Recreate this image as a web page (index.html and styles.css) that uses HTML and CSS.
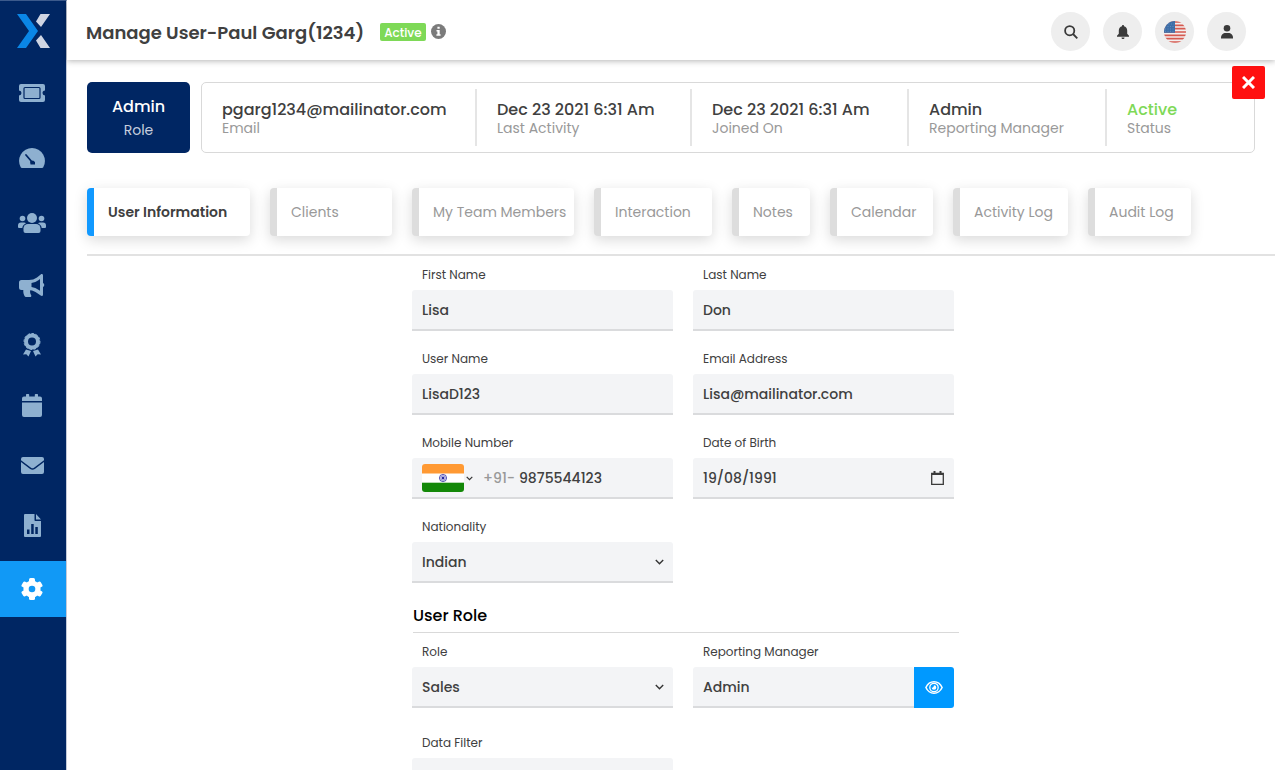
FILE: index.html
```html
<!DOCTYPE html>
<html lang="en">
<head>
  <meta charset="UTF-8">
  <meta name="viewport" content="width=device-width, initial-scale=1.0">
  <title>Manage User</title>
  <link rel="stylesheet" href="styles.css">
</head>
<body>
  <div class="app">
    <!-- Sidebar -->
    <aside class="sidebar">
      <a class="logo" href="#" aria-label="Home">
        <svg width="33" height="34" viewBox="0 0 33 34">
          <path fill="#0a86e6" d="M0 0h9l12 17L9 34H0l12-17z"/>
          <path fill="#cfd5e3" d="M23.500 0H33l-9 13-5-5.500zM23.500 34H33l-9-13-5 5.500z"/>
        </svg>
      </a>
      <nav class="menu">
        <a class="menu-item tall" href="#" aria-label="Tickets">
          <svg width="26" height="18" viewBox="0 0 26 18">
            <path fill="currentColor" d="M2 0h22a2 2 0 0 1 2 2v4.500a2.500 2.500 0 0 0 0 5V16a2 2 0 0 1-2 2H2a2 2 0 0 1-2-2v-4.500a2.500 2.500 0 0 0 0-5V2a2 2 0 0 1 2-2z"/>
            <rect x="5" y="3.500" width="16" height="11" rx="1" fill="none" stroke="#002663" stroke-width="1.200"/>
          </svg>
        </a>
        <a class="menu-item tall" href="#" aria-label="Dashboard">
          <svg width="26" height="20" viewBox="0 0 26 20">
            <path fill="currentColor" d="M13 0a13 13 0 0 1 11.300 19.300c-.3.500-.7.700-1.200.700H2.900c-.500 0-.9-.2-1.200-.700A13 13 0 0 1 13 0z"/>
            <path d="M7 7l6 7" stroke="#002663" stroke-width="1.800" stroke-linecap="round"/>
            <path d="M11 13.500l3-1 2 1.500v2.500h-4.500z" fill="#002663"/>
          </svg>
        </a>
        <a class="menu-item tall" href="#" aria-label="Users">
          <svg width="28" height="20" viewBox="0 0 28 20" fill="currentColor">
            <circle cx="14" cy="5" r="5"/>
            <circle cx="4.500" cy="5.500" r="2.800"/>
            <circle cx="23.500" cy="5.500" r="2.800"/>
            <path d="M5.500 18v-2.500a4.500 4.500 0 0 1 4.500-4.500h8a4.500 4.500 0 0 1 4.500 4.500V18a2 2 0 0 1-2 2h-13a2 2 0 0 1-2-2z"/>
            <path d="M3 9.500h3c.8 0 1.500.3 2 .8-2.200 1-3.500 2.700-3.700 4.700H1a1 1 0 0 1-1-1v-1.500a3 3 0 0 1 3-3zM25 9.500h-3c-.8 0-1.500.3-2 .8 2.200 1 3.500 2.700 3.700 4.700H27a1 1 0 0 0 1-1v-1.500a3 3 0 0 0-3-3z"/>
          </svg>
        </a>
        <a class="menu-item" href="#" aria-label="Campaigns">
          <svg width="26" height="23" viewBox="0 0 26 23" fill="currentColor">
            <path fill-rule="evenodd" d="M24 9V1.500c0-.8-.4-1.500-1.200-1.500-.5 0-.8.2-1.100.4L18 3.400A15 15 0 0 1 10 6H2.500A2.500 2.500 0 0 0 0 8.500v5A2.500 2.500 0 0 0 2.500 16h1.800c-.2 2.200.3 4.200 1.200 6 .3.600.9 1 1.500 1h4c1.100 0 1.700-1.200 1.100-2.100-.9-1.300-1.200-3-.9-4.700 2.500.3 4.900 1.200 6.800 2.700l3.700 2.700c.3.200.7.400 1.100.4.800 0 1.200-.7 1.200-1.500V13a2.200 2.200 0 0 0 0-4zM21 16.800l-1.200-.9A17 17 0 0 0 12.500 13V9a17 17 0 0 0 7.300-3l1.200-.9z"/>
          </svg>
        </a>
        <a class="menu-item" href="#" aria-label="Awards">
          <svg width="18" height="24" viewBox="0 0 18 24">
            <circle cx="9" cy="8.500" r="6" fill="none" stroke="currentColor" stroke-width="4"/>
            <circle cx="9" cy="8.500" r="8" fill="none" stroke="currentColor" stroke-width="1" stroke-dasharray="2.600 1.500"/>
            <path fill="currentColor" d="M3 16.500l5 1.500-2.500 5.500-2.200-2.300-3.300.3zM15 16.500l-5 1.500 2.500 5.500 2.200-2.300 3.300.3z"/>
          </svg>
        </a>
        <a class="menu-item" href="#" aria-label="Calendar">
          <svg width="20" height="23" viewBox="0 0 20 23" fill="currentColor">
            <path d="M0 7V4.500a2 2 0 0 1 2-2h2V.7C4 .3 4.300 0 4.700 0h1.800c.4 0 .7.300.7.700v1.800h5.600V.7c0-.4.300-.7.7-.7h1.800c.4 0 .7.300.7.700v1.800h2a2 2 0 0 1 2 2V7zM0 8.400h20V21a2 2 0 0 1-2 2H2a2 2 0 0 1-2-2z"/>
          </svg>
        </a>
        <a class="menu-item" href="#" aria-label="Mail">
          <svg width="23" height="17" viewBox="0 0 23 17" fill="currentColor">
            <path d="M0 3.200V2a2 2 0 0 1 2-2h19a2 2 0 0 1 2 2v1.200L13 10.800c-.9.700-2.100.7-3 0z"/>
            <path d="M0 5l9.200 7c1.400 1 3.200 1 4.600 0L23 5v10a2 2 0 0 1-2 2H2a2 2 0 0 1-2-2z"/>
          </svg>
        </a>
        <a class="menu-item" href="#" aria-label="Reports">
          <svg width="17" height="23" viewBox="0 0 17 23">
            <path fill="currentColor" d="M1 0h9.500v6c0 .6.400 1 1 1H17v15a1 1 0 0 1-1 1H1a1 1 0 0 1-1-1V1a1 1 0 0 1 1-1zM12 0l5 5.500h-5z"/>
            <path fill="#002663" d="M3 15.500h2.500V20H3zM7.200 10h2.500v10H7.200zM11.300 13h2.500v7h-2.500z"/>
          </svg>
        </a>
        <a class="menu-item active" href="#" aria-label="Settings">
          <svg width="22" height="22" viewBox="0 0 22 22" fill="#fff">
            <circle cx="11" cy="11" r="8.600"/>
            <rect x="8" y="0" width="6" height="22" rx="1.500"/>
            <rect x="8" y="0" width="6" height="22" rx="1.500" transform="rotate(60 11 11)"/>
            <rect x="8" y="0" width="6" height="22" rx="1.500" transform="rotate(120 11 11)"/>
            <circle cx="11" cy="11" r="3.300" fill="#1199f6"/>
          </svg>
        </a>
      </nav>
    </aside>

    <div class="page">
      <!-- Top bar -->
      <header class="topbar">
        <h1 class="title">Manage User-Paul Garg(1234)</h1>
        <span class="badge">Active</span>
        <svg class="info" width="15" height="15" viewBox="0 0 15 15">
          <circle cx="7.500" cy="7.500" r="7.500" fill="#7b7b7b"/>
          <path fill="#fff" d="M6.400 2.800h2.300v2H6.400zM5.500 6h3.200v4.200h.9v1.500H5.400v-1.500h1V7.500h-.9z"/>
        </svg>
        <div class="actions">
          <button class="round-btn" type="button" aria-label="Search">
            <svg width="14" height="14" viewBox="0 0 14 14" fill="none" stroke="#3a3a3a" stroke-width="1.800">
              <circle cx="5.700" cy="5.700" r="4.600"/>
              <path d="M9 9l4.300 4.300"/>
            </svg>
          </button>
          <button class="round-btn" type="button" aria-label="Notifications">
            <svg width="12" height="14" viewBox="0 0 12 14" fill="#3a3a3a">
              <path d="M6 0c.6 0 1 .4 1 1v.3c1.900.5 3.200 2.100 3.200 4.200v3.200l1.800 2.100v.9H0v-.9l1.800-2.100V5.500c0-2.100 1.300-3.700 3.200-4.200V1c0-.6.400-1 1-1zM4.500 12.400h3c0 1-.7 1.600-1.500 1.600s-1.500-.6-1.500-1.600z"/>
            </svg>
          </button>
          <button class="round-btn" type="button" aria-label="Language">
            <svg width="22" height="22" viewBox="0 0 22 22">
              <clipPath id="round"><circle cx="11" cy="11" r="11"/></clipPath>
              <g clip-path="url(#round)">
                <rect width="22" height="22" fill="#f3efee"/>
                <path stroke="#d55a50" stroke-width="1.700" d="M0 1h22M0 4.300h22M0 7.600h22M0 11h22M0 14.300h22M0 17.600h22M0 21h22"/>
                <rect width="11" height="11.800" fill="#3d6ea8"/>
                <path stroke="#7f9fc6" stroke-width=".6" stroke-dasharray="1 1.500" d="M2 3h9M1 5.500h10M1 8h10M1 10.300h10"/>
              </g>
            </svg>
          </button>
          <button class="round-btn" type="button" aria-label="Profile">
            <svg width="12" height="14" viewBox="0 0 12 14" fill="#3a3a3a">
              <circle cx="6" cy="3.300" r="3.300"/>
              <path d="M0 13.500v-1c0-2.500 2.200-4.500 4.500-4.500h3C9.800 8 12 10 12 12.500v1z"/>
            </svg>
          </button>
        </div>
      </header>

      <main class="content">
        <!-- User summary -->
        <section class="summary">
          <div class="role-card">
            <strong class="role-name">Admin</strong>
            <span class="role-label">Role</span>
          </div>
          <dl class="facts">
            <div class="fact"><dt>Email</dt><dd>pgarg1234@mailinator.com</dd></div>
            <div class="fact"><dt>Last Activity</dt><dd>Dec 23 2021 6:31 Am</dd></div>
            <div class="fact"><dt>Joined On</dt><dd>Dec 23 2021 6:31 Am</dd></div>
            <div class="fact"><dt>Reporting Manager</dt><dd>Admin</dd></div>
            <div class="fact"><dt>Status</dt><dd class="green">Active</dd></div>
          </dl>
          <button class="close" type="button" aria-label="Close">
            <svg width="13" height="13" viewBox="0 0 13 13" stroke="#fff" stroke-width="3">
              <path d="M1 1l11 11M12 1L1 12"/>
            </svg>
          </button>
        </section>

        <!-- Tabs -->
        <nav class="tabs">
          <a class="tab current" href="#">User Information</a>
          <a class="tab" href="#">Clients</a>
          <a class="tab" href="#">My Team Members</a>
          <a class="tab" href="#">Interaction</a>
          <a class="tab" href="#">Notes</a>
          <a class="tab" href="#">Calendar</a>
          <a class="tab" href="#">Activity Log</a>
          <a class="tab" href="#">Audit Log</a>
        </nav>

        <!-- User form -->
        <form class="form">
          <div class="fields">
            <div class="field">
              <label for="firstName">First Name</label>
              <input class="control" type="text" id="firstName" value="Lisa">
            </div>
            <div class="field">
              <label for="lastName">Last Name</label>
              <input class="control" type="text" id="lastName" value="Don">
            </div>
            <div class="field">
              <label for="userName">User Name</label>
              <input class="control" type="text" id="userName" value="LisaD123">
            </div>
            <div class="field">
              <label for="email">Email Address</label>
              <input class="control" type="email" id="email" value="Lisa@mailinator.com">
            </div>
            <div class="field">
              <label for="mobile">Mobile Number</label>
              <div class="control group">
                <button class="country" type="button" aria-label="Country code">
                  <svg width="42" height="28" viewBox="0 0 42 28">
                    <clipPath id="flag"><rect width="42" height="28" rx="3"/></clipPath>
                    <g clip-path="url(#flag)">
                      <rect width="42" height="28" fill="#fff"/>
                      <rect width="42" height="9.500" fill="#ff9933"/>
                      <rect y="18.700" width="42" height="9.300" fill="#138808"/>
                    </g>
                    <circle cx="21" cy="14" r="3.600" fill="#d9d9f2" stroke="#3b3ba8" stroke-width=".8"/>
                    <path stroke="#3b3ba8" stroke-width=".4" d="M17.500 14h7M21 10.500v7M18.500 11.500l5 5M23.500 11.500l-5 5"/>
                    <circle cx="21" cy="14" r="1.200" fill="#26269c"/>
                  </svg>
                  <svg width="7" height="5" viewBox="0 0 7 5" fill="none" stroke="#333" stroke-width="1.200">
                    <path d="M.7.900l2.800 2.800L6.300.900"/>
                  </svg>
                </button>
                <span class="prefix">+91-</span>
                <input class="bare" type="tel" id="mobile" value="9875544123">
              </div>
            </div>
            <div class="field">
              <label for="birth">Date of Birth</label>
              <div class="control group">
                <input class="bare" type="text" id="birth" value="19/08/1991">
                <button class="picker" type="button" aria-label="Open calendar">
                  <svg width="13" height="14" viewBox="0 0 13 14" fill="none" stroke="#3a3a3a">
                    <path stroke-width="1.300" d="M.7 2.500h11.600v10.800H.7z"/>
                    <path stroke-width="2" d="M.7 3h11.600M3.500 0v3M9.500 0v3"/>
                  </svg>
                </button>
              </div>
            </div>
            <div class="field">
              <label for="nationality">Nationality</label>
              <div class="select">
                <select class="control" id="nationality"><option>Indian</option></select>
                <svg class="arrow" width="9" height="6" viewBox="0 0 9 6" fill="none" stroke="#333" stroke-width="1.400">
                  <path d="M.8 1l3.700 3.700L8.200 1"/>
                </svg>
              </div>
            </div>
          </div>

          <h2 class="section-title">User Role</h2>
          <div class="fields wide">
            <div class="field">
              <label for="role">Role</label>
              <div class="select">
                <select class="control" id="role"><option>Sales</option></select>
                <svg class="arrow" width="9" height="6" viewBox="0 0 9 6" fill="none" stroke="#333" stroke-width="1.400">
                  <path d="M.8 1l3.700 3.700L8.200 1"/>
                </svg>
              </div>
            </div>
            <div class="field">
              <label for="manager">Reporting Manager</label>
              <div class="with-button">
                <input class="control" type="text" id="manager" value="Admin">
                <button class="view" type="button" aria-label="View manager">
                  <svg width="18" height="13" viewBox="0 0 18 13" fill="none" stroke="#fff" stroke-width="1.500">
                    <path d="M.9 6.500C2.500 3 5.500.8 9 .8s6.500 2.200 8.100 5.700c-1.600 3.500-4.600 5.700-8.100 5.700S2.500 10 .9 6.500z"/>
                    <circle cx="9" cy="6.500" r="4.200" stroke-width="1.300"/>
                    <path fill="#fff" stroke="none" d="M9 4.200a2.300 2.300 0 1 1-2.300 2.300c.9.500 2.100-.3 2.300-2.300z"/>
                  </svg>
                </button>
              </div>
            </div>
            <div class="field">
              <label for="filter">Data Filter</label>
              <div class="select">
                <select class="control" id="filter"></select>
              </div>
            </div>
          </div>
        </form>
      </main>
    </div>
  </div>
</body>
</html>
```
FILE: styles.css
```css
* {
  box-sizing: border-box;
}
body {
  margin: 0;
  font-family: Poppins, Inter, sans-serif;
  font-size: 14px;
  color: #404040;
  background: #fff;
}
button {
  padding: 0;
  border: none;
  cursor: pointer;
}
svg {
  display: block;
  flex: none;
}
a {
  text-decoration: none;
}
.app {
  display: flex;
  height: 100vh;
  overflow: hidden;
}

/* Sidebar */
.sidebar {
  flex: none;
  width: 67px;
  background: #002663;
  border-top: 1px solid #3c5a8c;
  border-right: 1px solid #c3cad9;
}
.logo {
  display: flex;
  align-items: center;
  justify-content: center;
  height: 59px;
}
.menu {
  display: flex;
  flex-direction: column;
}
.menu-item {
  display: flex;
  align-items: center;
  justify-content: center;
  height: 60px;
  padding-right: 2px;
  color: #8eb0d0;
}
.menu-item.tall {
  height: 65px;
}
.menu-item.active {
  height: 56px;
  margin-top: 6px;
  background: #1199f6;
}

/* Top bar */
.page {
  flex: 1;
  display: flex;
  flex-direction: column;
  min-width: 0;
}
.topbar {
  display: flex;
  flex: none;
  align-items: center;
  height: 60px;
  padding: 3px 29px 0 19px;
  box-shadow: 0 1px 6px rgba(0, 0, 0, 0.3);
  z-index: 1;
}
.title {
  margin: 0;
  padding-top: 2px;
  font-size: 18px;
  font-weight: 600;
  line-height: 28px;
}
.badge {
  margin: 0 5px 0 16px;
  padding: 1px 4px 0;
  font-size: 12px;
  font-weight: 500;
  line-height: 17px;
  color: #fff;
  background: #7ed957;
  border-radius: 2px;
}
.actions {
  display: flex;
  gap: 13px;
  margin-left: auto;
}
.round-btn {
  display: flex;
  align-items: center;
  justify-content: center;
  width: 39px;
  height: 39px;
  background: #eee;
  border-radius: 50%;
}

/* User summary */
.content {
  flex: 1;
  min-height: 0;
  overflow: hidden;
  padding: 22px 0 0 20px;
}
.summary {
  position: relative;
  display: flex;
  gap: 11px;
  padding-right: 20px;
}
.role-card {
  display: flex;
  flex: none;
  flex-direction: column;
  align-items: center;
  justify-content: center;
  width: 103px;
  height: 71px;
  padding-top: 2px;
  color: #fff;
  background: #002663;
  border-radius: 5px;
}
.role-name {
  font-size: 16px;
  font-weight: 500;
  line-height: 22px;
}
.role-label {
  line-height: 24px;
  color: #c6cede;
}
.facts {
  display: grid;
  flex: 1;
  grid-template-columns: 275fr 215fr 217fr 198fr 147fr;
  margin: 0;
  padding: 6px 0;
  border: 1px solid #d9d9d9;
  border-radius: 5px;
}
.fact {
  display: flex;
  flex-direction: column-reverse;
  justify-content: center;
  padding: 2px 0 0 20px;
  border-right: 2px solid #e5e5e5;
  white-space: nowrap;
}
.fact:last-child {
  border-right: none;
}
.fact dt {
  line-height: 18px;
  color: #999;
}
.fact dd {
  margin: 0;
  font-size: 16px;
  font-weight: 500;
  line-height: 18px;
}
.fact .green {
  color: #7ed957;
}
.close {
  position: absolute;
  top: -16px;
  right: 10px;
  display: flex;
  align-items: center;
  justify-content: center;
  width: 33px;
  height: 33px;
  background: #ff1010;
  border-radius: 2px;
}

/* Tabs */
.tabs {
  display: grid;
  grid-template-columns: 163px 122px 162px 118px 78px 103px 115px 103px;
  gap: 20px;
  padding: 35px 0 18px;
  border-bottom: 2px solid #e2e2e2;
}
.tab {
  height: 48px;
  padding-left: 14px;
  line-height: 48px;
  white-space: nowrap;
  color: #999;
  background: #fff;
  border-left: 7px solid #ddd;
  border-radius: 4px;
  box-shadow: 0 4px 14px rgba(0, 0, 0, 0.15);
}
.tab.current {
  font-weight: 600;
  color: #404040;
  border-left-color: #1199ff;
}

/* User form */
.form {
  width: 546px;
  margin: 0 auto;
  padding: 9px 0 0 4px;
}
.fields {
  display: grid;
  grid-template-columns: 1fr 1fr;
  gap: 18px 20px;
}
.fields.wide {
  row-gap: 25px;
}
.field {
  display: flex;
  flex-direction: column;
  gap: 6px;
  min-width: 0;
}
.field label {
  padding-left: 10px;
  font-size: 12px;
  line-height: 19px;
}
.control {
  width: 100%;
  height: 41px;
  padding: 1px 10px 0;
  font-family: inherit;
  font-size: 14px;
  font-weight: 500;
  color: #404040;
  background: #f3f4f6;
  border: none;
  border-bottom: 2px solid #dadbdd;
  border-radius: 3px 3px 0 0;
  appearance: none;
}
.group {
  display: flex;
  align-items: center;
}
.bare {
  flex: 1;
  min-width: 0;
  padding: 0;
  font: inherit;
  color: inherit;
  background: none;
  border: none;
}
.country {
  display: flex;
  align-items: center;
  gap: 2px;
  margin-right: 10px;
  background: none;
}
.prefix {
  margin-right: 4px;
  color: #999;
}
.picker {
  background: none;
}
.select {
  position: relative;
}
.arrow {
  position: absolute;
  top: 17px;
  right: 9px;
  pointer-events: none;
}
.section-title {
  margin: 21px -5px 9px 1px;
  padding-bottom: 4px;
  font-size: 16px;
  font-weight: 500;
  line-height: 24px;
  color: #000;
  border-bottom: 1px solid #d9d9d9;
}
.with-button {
  display: flex;
}
.with-button .control {
  flex: 1;
  min-width: 0;
}
.view {
  display: flex;
  align-items: center;
  justify-content: center;
  width: 40px;
  height: 41px;
  background: #0099ff;
  border-radius: 0 3px 3px 0;
}
```
